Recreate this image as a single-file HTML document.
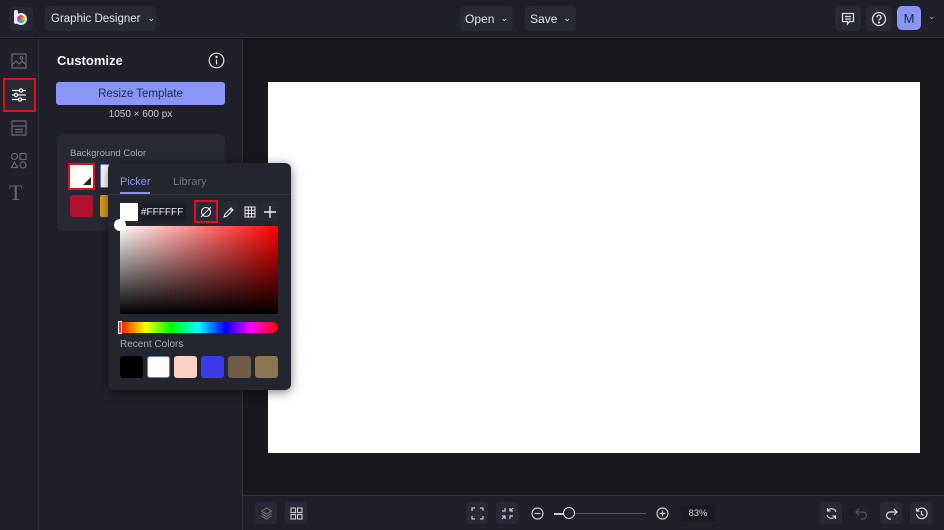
<!DOCTYPE html>
<html><head><meta charset="utf-8"><style>
*{box-sizing:border-box;margin:0;padding:0}
body{width:944px;height:530px;overflow:hidden;background:#17181e;font-family:"Liberation Sans",sans-serif;color:#e6e7ee;position:relative}
.abs{position:absolute;white-space:nowrap}
.top{left:0;top:0;width:944px;height:38px;background:#1f2029;border-bottom:1px solid #2c2e38}
.btn{background:#272934;border-radius:4px;font-size:12px;color:#e4e5ea;display:flex;align-items:center;justify-content:center}
.rail{left:0;top:39px;width:39px;height:491px;background:#1f2029;border-right:1px solid #2c2e38}
.panel{left:39px;top:39px;width:204px;height:491px;background:#1f2029;border-right:1px solid #2c2e38}
.bottom{left:243px;top:495px;width:701px;height:35px;background:#1f2029;border-top:1px solid #2c2e38}
.ib{width:22px;height:22px;border-radius:3px;background:#272934;display:flex;align-items:center;justify-content:center}
.red{outline:2px solid #e0101a}
svg{display:block}
</style></head><body>
<div class="abs top"></div>
<div class="abs" style="left:9px;top:7px;width:24px;height:24px;border-radius:4px;background:#272934"></div>
<div class="abs" style="left:14px;top:10px;width:4px;height:14px;background:#eee;border-radius:2px"></div>
<div class="abs" style="left:15px;top:13px;width:12px;height:12px;border-radius:50%;background:conic-gradient(#f33,#fc0,#3c3,#39f,#c3f,#f33);border:2px solid #eee"></div>
<div class="abs btn" style="left:45px;top:6px;width:111px;height:25px;justify-content:flex-start;padding-left:6px;font-size:11.5px">Graphic Designer <span style="margin-left:7px;font-size:9px">⌄</span></div>
<div class="abs btn" style="left:460px;top:6px;width:53px;height:25px">Open <span style="margin-left:6px;font-size:9px">⌄</span></div>
<div class="abs btn" style="left:525px;top:6px;width:51px;height:25px">Save <span style="margin-left:6px;font-size:9px">⌄</span></div>
<div class="abs btn" style="left:835px;top:6px;width:26px;height:25px"><svg width="14" height="14" viewBox="0 0 14 14" fill="none" stroke="#ddd" stroke-width="1.3"><path d="M1.5 1.5h11v8h-4l-2 2.5v-2.5h-5z M4 4.5h6 M4 7h6"/></svg></div>
<div class="abs btn" style="left:866px;top:6px;width:26px;height:25px"><svg width="16" height="16" viewBox="0 0 16 16" fill="none" stroke="#ddd" stroke-width="1.3"><circle cx="8" cy="8" r="6.5"/><path d="M6 6.3a2 2 0 1 1 2.5 1.9c-.5.2-.5.6-.5 1.3"/><circle cx="8" cy="11.5" r=".5" fill="#ddd"/></svg></div>
<div class="abs" style="left:897px;top:6px;width:24px;height:24px;border-radius:5px;background:#8a96f5;color:#1e2340;font-size:13px;display:flex;align-items:center;justify-content:center">M</div>
<div class="abs" style="left:928px;top:11px;font-size:9px;color:#aaa">⌄</div>

<div class="abs rail"></div>
<svg class="abs" style="left:11px;top:53px" width="16" height="16" viewBox="0 0 16 16" fill="none" stroke="#666a78" stroke-width="1.2"><rect x="1" y="1" width="14" height="14"/><path d="M1 12l4-4 3 3 3-3 4 4"/><circle cx="10.5" cy="5" r="1.3"/></svg>
<div class="abs red" style="left:5px;top:80px;width:29px;height:30px;background:#272934"></div>
<svg class="abs" style="left:11px;top:87px" width="16" height="16" viewBox="0 0 16 16" fill="none" stroke="#eee" stroke-width="1.3"><path d="M1 3.5h14M1 8h14M1 12.5h14"/><circle cx="10" cy="3.5" r="1.6" fill="#272934"/><circle cx="5" cy="8" r="1.6" fill="#272934"/><circle cx="9" cy="12.5" r="1.6" fill="#272934"/></svg>
<svg class="abs" style="left:11px;top:120px" width="16" height="16" viewBox="0 0 16 16" fill="none" stroke="#666a78" stroke-width="1.2"><rect x="1" y="1" width="14" height="14"/><path d="M1 6h14M4 9.5h8M4 12h8"/></svg>
<svg class="abs" style="left:10px;top:152px" width="17" height="17" viewBox="0 0 17 17" fill="none" stroke="#666a78" stroke-width="1.2"><circle cx="4.5" cy="4.5" r="3"/><rect x="10" y="1.5" width="6" height="6"/><path d="M4.5 10l3 5.5h-6z"/><circle cx="13" cy="13" r="3"/></svg>
<div class="abs" style="left:9px;top:180px;font-family:'Liberation Serif',serif;font-size:22px;color:#666a78">T</div>

<div class="abs panel"></div>
<div class="abs" style="left:57px;top:53px;font-size:13px;font-weight:bold;color:#f1f2f6">Customize</div>
<svg class="abs" style="left:208px;top:52px" width="17" height="17" viewBox="0 0 17 17" fill="none" stroke="#e6e7ee" stroke-width="1.2"><circle cx="8.5" cy="8.5" r="7.3"/><path d="M8.5 7.5v5"/><circle cx="8.5" cy="5" r=".6" fill="#e6e7ee"/></svg>
<div class="abs" style="left:56px;top:82px;width:169px;height:23px;border-radius:3px;background:#8a96f5;color:#232a4c;font-size:11.5px;display:flex;align-items:center;justify-content:center">Resize Template</div>
<div class="abs" style="left:56px;top:109px;width:169px;text-align:center;font-size:10px;color:#c8c9d0">1050 × 600 px</div>
<div class="abs" style="left:57px;top:134px;width:168px;height:97px;border-radius:5px;background:#272934"></div>
<div class="abs" style="left:70px;top:148px;font-size:9.5px;color:#a8aab4">Background Color</div>
<div class="abs red" style="left:70px;top:165px;width:23px;height:23px;background:#fff"></div>
<div class="abs" style="left:83px;top:177px;width:0;height:0;border-left:8px solid transparent;border-bottom:8px solid #222"></div>
<div class="abs" style="left:100px;top:164px;width:10px;height:24px;background:#fff;border:1px solid #6b7be8;border-radius:2px"></div>
<div class="abs" style="left:70px;top:195px;width:23px;height:22px;border-radius:3px;background:#b0122e"></div>
<div class="abs" style="left:100px;top:195px;width:10px;height:22px;border-radius:2px;background:#d89b1c"></div>

<div class="abs" style="left:268px;top:82px;width:652px;height:371px;background:#fff"></div>

<div class="abs" style="left:108px;top:163px;width:183px;height:227px;border-radius:6px;background:#23252f;box-shadow:0 2px 10px rgba(0,0,0,.5)"></div>
<div class="abs" style="left:120px;top:176px;font-size:11px;color:#8a96f5">Picker</div>
<div class="abs" style="left:120px;top:192px;width:30px;height:2px;background:#8a96f5"></div>
<div class="abs" style="left:173px;top:176px;font-size:11px;color:#6e7180">Library</div>
<div class="abs" style="left:108px;top:194px;width:183px;height:1px;background:#33353f"></div>
<div class="abs" style="left:120px;top:203px;width:18px;height:18px;background:#fff"></div>
<div class="abs" style="left:138px;top:203px;width:48px;height:18px;background:#1d1f27;font-size:10px;color:#e6e7ee;padding:4px 0 0 3px">#FFFFFF</div>
<div class="abs ib red" style="left:196px;top:202px;width:20px;height:19px;border-radius:0"><svg width="12" height="12" viewBox="0 0 12 12" fill="none" stroke="#eee" stroke-width="1.1"><circle cx="6" cy="6" r="4.5"/><path d="M1 11L11 1"/></svg></div>
<div class="abs ib" style="left:219px;top:202px;width:19px;height:19px"><svg width="12" height="12" viewBox="0 0 12 12" fill="none" stroke="#eee" stroke-width="1.1"><path d="M1 11l1-3 6-6 2 2-6 6z M7 3l2 2"/></svg></div>
<div class="abs ib" style="left:240px;top:202px;width:19px;height:19px"><svg width="12" height="12" viewBox="0 0 12 12" fill="none" stroke="#eee" stroke-width="1"><rect x="1" y="1" width="10" height="10"/><path d="M4.3 1v10M7.6 1v10M1 4.3h10M1 7.6h10"/></svg></div>
<div class="abs ib" style="left:260px;top:202px;width:19px;height:19px"><svg width="12" height="12" viewBox="0 0 12 12" stroke="#eee" stroke-width="1.4"><path d="M6 0v12M0 6h12"/></svg></div>
<div class="abs" style="left:120px;top:226px;width:158px;height:88px;background:linear-gradient(to bottom,rgba(0,0,0,0),#000),linear-gradient(to right,#fff,#f00);border-radius:2px"></div>
<div class="abs" style="left:114px;top:219px;width:12px;height:12px;border-radius:50%;background:#fff"></div>
<div class="abs" style="left:118px;top:322px;width:160px;height:11px;border-radius:6px;background:linear-gradient(to right,#f00,#ff0 17%,#0f0 33%,#0ff 50%,#00f 67%,#f0f 83%,#f00)"></div>
<div class="abs" style="left:118px;top:321px;width:4px;height:13px;border:1px solid #fff;background:#e33"></div>
<div class="abs" style="left:120px;top:339px;font-size:10px;color:#a8aab4">Recent Colors</div>
<div class="abs" style="left:120px;top:356px;width:23px;height:22px;border-radius:3px;background:#000"></div>
<div class="abs" style="left:147px;top:356px;width:23px;height:22px;border-radius:3px;background:#fff;border:1px solid #6b7be8"></div>
<div class="abs" style="left:174px;top:356px;width:23px;height:22px;border-radius:3px;background:#fdd0c4"></div>
<div class="abs" style="left:201px;top:356px;width:23px;height:22px;border-radius:3px;background:#3b3be8"></div>
<div class="abs" style="left:228px;top:356px;width:23px;height:22px;border-radius:3px;background:#715c47"></div>
<div class="abs" style="left:255px;top:356px;width:23px;height:22px;border-radius:3px;background:#8c7550"></div>

<div class="abs bottom"></div>
<div class="abs ib" style="left:255px;top:502px"><svg width="13" height="13" viewBox="0 0 13 13" fill="none" stroke="#777" stroke-width="1"><path d="M6.5 1l5 3-5 3-5-3z M1.5 6.5l5 3 5-3 M1.5 9l5 3 5-3"/></svg></div>
<div class="abs ib" style="left:285px;top:502px"><svg width="13" height="13" viewBox="0 0 13 13" fill="none" stroke="#ccc" stroke-width="1.1"><rect x="1" y="1" width="4.5" height="4.5"/><rect x="7.5" y="1" width="4.5" height="4.5"/><rect x="1" y="7.5" width="4.5" height="4.5"/><rect x="7.5" y="7.5" width="4.5" height="4.5"/></svg></div>
<div class="abs ib" style="left:466px;top:502px"><svg width="13" height="13" viewBox="0 0 13 13" fill="none" stroke="#ccc" stroke-width="1.2"><path d="M1 4V1h3M9 1h3v3M12 9v3H9M4 12H1V9"/></svg></div>
<div class="abs ib" style="left:496px;top:502px"><svg width="13" height="13" viewBox="0 0 13 13" fill="none" stroke="#ccc" stroke-width="1.2"><path d="M1 4h3V1M9 1v3h3M12 9H9v3M4 12V9H1M9 4l3-3M4 9l-3 3"/></svg></div>
<svg class="abs" style="left:531px;top:507px" width="13" height="13" viewBox="0 0 13 13" fill="none" stroke="#ccc" stroke-width="1.2"><circle cx="6.5" cy="6.5" r="5.5"/><path d="M3.5 6.5h6"/></svg>
<div class="abs" style="left:554px;top:513px;width:92px;height:1px;background:#555"></div>
<div class="abs" style="left:554px;top:513px;width:12px;height:2px;background:#ccc"></div>
<div class="abs" style="left:563px;top:507px;width:12px;height:12px;border-radius:50%;border:1.5px solid #ddd;background:#1f2029"></div>
<svg class="abs" style="left:656px;top:507px" width="13" height="13" viewBox="0 0 13 13" fill="none" stroke="#ccc" stroke-width="1.2"><circle cx="6.5" cy="6.5" r="5.5"/><path d="M3.5 6.5h6M6.5 3.5v6"/></svg>
<div class="abs" style="left:681px;top:505px;width:34px;height:17px;background:#1a1b22;font-size:9.5px;color:#ccc;text-align:center;padding-top:3px">83%</div>
<div class="abs ib" style="left:820px;top:502px"><svg width="13" height="13" viewBox="0 0 13 13" fill="none" stroke="#ccc" stroke-width="1.2"><path d="M11 5A4.7 4.7 0 0 0 2.5 4M2 8a4.7 4.7 0 0 0 8.5 1M2.5 1v3h3M10.5 12V9h-3"/></svg></div>
<svg class="abs" style="left:855px;top:507px" width="13" height="13" viewBox="0 0 13 13" fill="none" stroke="#555" stroke-width="1.2"><path d="M4 2L1 5l3 3M1 5h7a3.5 3.5 0 0 1 0 7H6"/></svg>
<div class="abs ib" style="left:880px;top:502px"><svg width="13" height="13" viewBox="0 0 13 13" fill="none" stroke="#ddd" stroke-width="1.2"><path d="M9 2l3 3-3 3M12 5H5a3.5 3.5 0 0 0 0 7h1"/></svg></div>
<div class="abs ib" style="left:910px;top:502px"><svg width="13" height="13" viewBox="0 0 13 13" fill="none" stroke="#ddd" stroke-width="1.2"><path d="M2 4a5.3 5.3 0 1 1-.5 3M1.5 1v3h3M6.5 4v3l2 1.5"/></svg></div>
</body></html>
